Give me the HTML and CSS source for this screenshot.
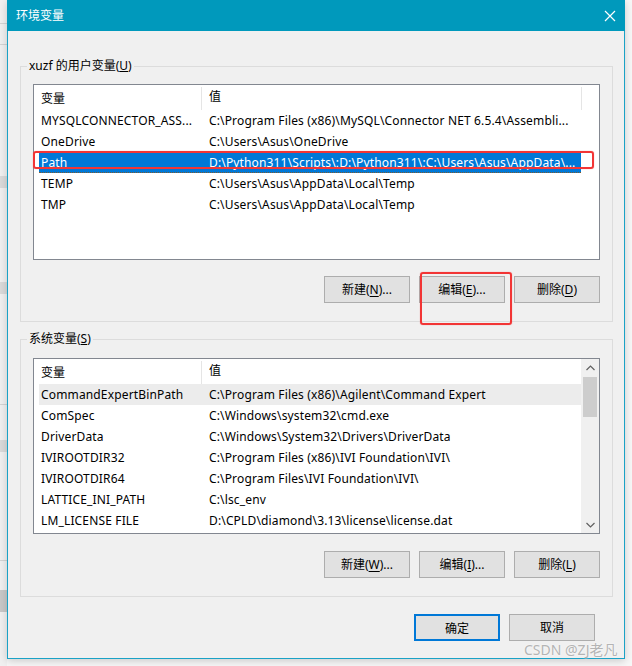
FILE: index.html
```html
<!DOCTYPE html>
<html lang="zh-CN">
<head>
<meta charset="utf-8">
<title>环境变量</title>
<link rel="stylesheet" href="styles.css">
</head>
<body>
<div class="screen">
  <div class="dialog">
    <div class="titlebar">
      <span class="title">环境变量</span>
      <svg class="close" width="12" height="12" viewBox="0 0 12 12"><path d="M1 1 L11 11 M11 1 L1 11" stroke="#fff" stroke-width="1.2" fill="none"/></svg>
    </div>
    <div class="content">
      <fieldset class="group group-user">
        <legend>xuzf 的用户变量(<u>U</u>)</legend>
        <div class="list">
          <div class="list-main">
            <div class="lv-head"><div class="c1">变量</div><div class="c2">值</div></div>
            <div class="row"><div class="c1">MYSQLCONNECTOR_ASS...</div><div class="c2">C:\Program Files (x86)\MySQL\Connector NET 6.5.4\Assembli...</div></div>
            <div class="row"><div class="c1">OneDrive</div><div class="c2">C:\Users\Asus\OneDrive</div></div>
            <div class="row selected"><div class="c1">Path</div><div class="c2">D:\Python311\Scripts\;D:\Python311\;C:\Users\Asus\AppData\...</div></div>
            <div class="row"><div class="c1">TEMP</div><div class="c2">C:\Users\Asus\AppData\Local\Temp</div></div>
            <div class="row"><div class="c1">TMP</div><div class="c2">C:\Users\Asus\AppData\Local\Temp</div></div>
          </div>
          <div class="list-side"><div class="head-sep"></div></div>
        </div>
        <div class="btnrow">
          <button class="btn">新建(<u>N</u>)...</button>
          <button class="btn">编辑(<u>E</u>)...</button>
          <button class="btn">删除(<u>D</u>)</button>
        </div>
      </fieldset>
      <fieldset class="group group-sys">
        <legend>系统变量(<u>S</u>)</legend>
        <div class="list">
          <div class="list-main">
            <div class="lv-head"><div class="c1">变量</div><div class="c2">值</div></div>
            <div class="row hover"><div class="c1">CommandExpertBinPath</div><div class="c2">C:\Program Files (x86)\Agilent\Command Expert</div></div>
            <div class="row"><div class="c1">ComSpec</div><div class="c2">C:\Windows\system32\cmd.exe</div></div>
            <div class="row"><div class="c1">DriverData</div><div class="c2">C:\Windows\System32\Drivers\DriverData</div></div>
            <div class="row"><div class="c1">IVIROOTDIR32</div><div class="c2">C:\Program Files (x86)\IVI Foundation\IVI\</div></div>
            <div class="row"><div class="c1">IVIROOTDIR64</div><div class="c2">C:\Program Files\IVI Foundation\IVI\</div></div>
            <div class="row"><div class="c1">LATTICE_INI_PATH</div><div class="c2">C:\lsc_env</div></div>
            <div class="row"><div class="c1">LM_LICENSE FILE</div><div class="c2">D:\CPLD\diamond\3.13\license\license.dat</div></div>
          </div>
          <div class="scrollbar">
            <div class="sb-arrow"><svg width="9" height="6" viewBox="0 0 9 6"><path d="M0.5 5 L4.5 1 L8.5 5" stroke="#606060" stroke-width="1.2" fill="none"/></svg></div>
            <div class="sb-track"><div class="sb-thumb"></div></div>
            <div class="sb-arrow"><svg width="9" height="6" viewBox="0 0 9 6"><path d="M0.5 1 L4.5 5 L8.5 1" stroke="#606060" stroke-width="1.2" fill="none"/></svg></div>
          </div>
        </div>
        <div class="btnrow">
          <button class="btn">新建(<u>W</u>)...</button>
          <button class="btn">编辑(<u>I</u>)...</button>
          <button class="btn">删除(<u>L</u>)</button>
        </div>
      </fieldset>
      <div class="dlg-buttons">
        <button class="btn btn-default">确定</button>
        <button class="btn">取消</button>
      </div>
    </div>
  </div>
  <div class="mark mark-path"></div>
  <div class="mark mark-edit"></div>
  <div class="watermark">CSDN @ZJ老凡</div>
</div>
</body>
</html>
```
FILE: styles.css
```css
html, body {
  margin: 0;
  padding: 0;
}
body {
  width: 632px;
  height: 666px;
  overflow: hidden;
  background: #f4f4f4;
  font-family: "Noto Sans", "Noto Sans CJK SC", sans-serif;
  font-size: 12px;
  color: #000;
}
.screen {
  position: relative;
  width: 632px;
  height: 666px;
  box-sizing: border-box;
  padding-left: 7px;
  background:
    linear-gradient(#d4d4d4, #d4d4d4) 0 23px / 7px 1px no-repeat,
    linear-gradient(#d4d4d4, #d4d4d4) 0 44px / 7px 1px no-repeat,
    linear-gradient(#dadada, #dadada) 0 176px / 7px 12px no-repeat,
    linear-gradient(#dadada, #dadada) 0 282px / 7px 12px no-repeat,
    linear-gradient(#d4d4d4, #d4d4d4) 0 404px / 7px 1px no-repeat,
    linear-gradient(#dadada, #dadada) 0 440px / 7px 12px no-repeat,
    linear-gradient(#d4d4d4, #d4d4d4) 0 560px / 7px 1px no-repeat,
    linear-gradient(#c8c8c8, #c8c8c8) 0 590px / 7px 22px no-repeat,
    linear-gradient(#f0f0f0, #f0f0f0) 0 0 / 7px 100% no-repeat,
    #f7f7f7;
}
.dialog {
  width: 618px;
  height: 659px;
  box-sizing: border-box;
  border: 1px solid #1aa2c6;
  border-top: none;
  background: #f0f0f0;
  display: flex;
  flex-direction: column;
  box-shadow: 0 2px 8px rgba(0,0,0,0.18);
}
.titlebar {
  height: 31px;
  flex: none;
  background: #0099bc;
  color: #fff;
  display: flex;
  align-items: center;
  justify-content: space-between;
  padding: 0 9px 0 9px;
  margin: 0 -1px;
}
.title {
  font-size: 12px;
  line-height: 16px;
  padding-top: 1px;
}
.close {
  display: block;
}
.content {
  padding: 27px 11px 0 12px;
  display: flex;
  flex-direction: column;
}
.group {
  margin: 0;
  border: 1px solid #dcdcdc;
  padding: 10px 12px 18px 12px;
  min-width: 0;
}
.group legend {
  padding: 0 2px;
  margin-left: -6px;
  line-height: 16px;
  font-size: 12px;
}
.group-sys {
  margin-top: 9px;
  padding-top: 11px;
}
.list {
  height: 176px;
  box-sizing: border-box;
  border: 1px solid #828790;
  background: #fff;
  display: flex;
}
.list-main {
  flex: 1;
  padding-left: 5px;
  min-width: 0;
}
.list-side {
  width: 18px;
  flex: none;
}
.head-sep {
  width: 1px;
  height: 23px;
  margin-top: 2px;
  background: #e5e5e5;
}
.lv-head {
  height: 25px;
  display: flex;
  align-items: stretch;
}
.lv-head .c1 {
  border-right: 1px solid #e5e5e5;
  margin: 2px 0 0 0;
  width: 160px;
}
.lv-head .c1, .lv-head .c2 {
  line-height: 23px;
}
.c1 {
  width: 161px;
  padding-left: 2px;
  flex: none;
  white-space: nowrap;
  overflow: hidden;
}
.c2 {
  flex: 1;
  padding-left: 7px;
  white-space: nowrap;
  overflow: hidden;
}
.row {
  height: 21px;
  line-height: 21px;
  display: flex;
  letter-spacing: 0.15px;
}
.row.selected {
  background: #0078d7;
  color: #fff;
  height: 20px;
  line-height: 21px;
  border-bottom: 1px dotted #7a5a30;
}
.row.hover {
  background: #ececec;
}
.scrollbar {
  width: 18px;
  flex: none;
  display: flex;
  flex-direction: column;
  background: #f0f0f0;
}
.sb-arrow {
  height: 17px;
  display: flex;
  align-items: center;
  justify-content: center;
}
.sb-track {
  flex: 1;
  padding: 1px 2px 0 2px;
}
.sb-thumb {
  height: 40px;
  background: #cdcdcd;
}
.btnrow {
  display: flex;
  justify-content: flex-end;
  gap: 9px;
  margin-top: 16px;
}
.group-sys .btnrow {
  margin-top: 17px;
}
.btn {
  width: 86px;
  height: 27px;
  box-sizing: border-box;
  border: 1px solid #adadad;
  background: #e1e1e1;
  font-family: "Noto Sans", "Noto Sans CJK SC", sans-serif;
  font-size: 12px;
  color: #000;
  padding: 0;
  margin: 0;
  line-height: 25px;
}
.btn u {
  text-underline-offset: 2px;
}
.btn-default {
  border: 2px solid #0078d7;
}
.dlg-buttons {
  display: flex;
  justify-content: flex-end;
  gap: 9px;
  margin-top: 17px;
  padding-right: 18px;
}
.mark {
  position: absolute;
  box-sizing: border-box;
  border: 2px solid #f23535;
  border-radius: 3px;
  box-shadow: 0 0 1px rgba(240,40,40,0.6);
}
.mark-path {
  left: 33px;
  top: 151px;
  width: 561px;
  height: 18px;
}
.mark-edit {
  left: 420px;
  top: 272px;
  width: 92px;
  height: 53px;
}
.watermark {
  position: absolute;
  left: 524px;
  top: 641px;
  font-size: 14px;
  line-height: 18px;
  color: #b4b4b4;
  text-shadow: 0 0 2px #fff;
  white-space: nowrap;
}
```
